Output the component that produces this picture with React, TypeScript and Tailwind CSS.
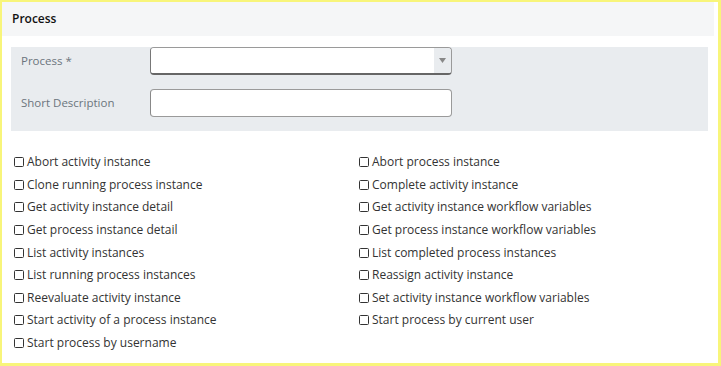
import React from "react";

const left = [
  "Abort activity instance",
  "Clone running process instance",
  "Get activity instance detail",
  "Get process instance detail",
  "List activity instances",
  "List running process instances",
  "Reevaluate activity instance",
  "Start activity of a process instance",
  "Start process by username",
];
const right = [
  "Abort process instance",
  "Complete activity instance",
  "Get activity instance workflow variables",
  "Get process instance workflow variables",
  "List completed process instances",
  "Reassign activity instance",
  "Set activity instance workflow variables",
  "Start process by current user",
];

function Item({ label }: { label: string }) {
  return (
    <div className="flex h-[22.6px] items-center">
      <span className="mr-[3px] inline-block h-[10px] w-[10px] shrink-0 rounded-[1.5px] border border-[#333] bg-white" />
      <span className="text-[12px] leading-none text-[#333]">{label}</span>
    </div>
  );
}

export default function App() {
  return (
    <div
      className="h-[366px] w-[721px] overflow-hidden border-2 border-b-[3px] border-r-[3px] border-[#f8f57a] bg-white"
      style={{ fontFamily: '"Open Sans", sans-serif' }}
    >
      <div className="mr-[4px] flex h-[34px] items-center bg-[#f5f6f7] pl-[10px]">
        <span className="text-[12px] font-semibold text-[#111]">Process</span>
      </div>
      <div className="ml-[9px] mr-[10px] mt-[11px] flex h-[84px] flex-col bg-[#e9ecef]">
        <div className="flex h-[28px] items-center">
          <span className="w-[139px] pl-[10px] text-[11.5px] text-[#6c757d]">Process *</span>
          <div className="flex h-[28px] w-[302px] overflow-hidden rounded-[4px] border border-[#9a9a9a] border-b-[2px] border-b-[#666] border-l-[#777]">
            <div className="flex-1 bg-white" />
            <div className="flex w-[17px] items-center justify-center bg-[#e9ecef]">
              <svg width="7" height="5" viewBox="0 0 7 5">
                <path d="M0 0 L7 0 L3.5 5 Z" fill="#888" />
              </svg>
            </div>
          </div>
        </div>
        <div className="mt-[14px] flex h-[28px] items-center">
          <span className="w-[139px] pl-[10px] text-[11.5px] text-[#6c757d]">Short Description</span>
          <div className="h-[28px] w-[302px] rounded-[4px] border border-[#9a9a9a] border-l-[#888] bg-white" />
        </div>
      </div>
      <div className="mt-[20px] grid grid-cols-[345px_1fr] pl-[12px]">
        <div>
          {left.map((l) => (
            <Item key={l} label={l} />
          ))}
        </div>
        <div>
          {right.map((l) => (
            <Item key={l} label={l} />
          ))}
        </div>
      </div>
    </div>
  );
}
